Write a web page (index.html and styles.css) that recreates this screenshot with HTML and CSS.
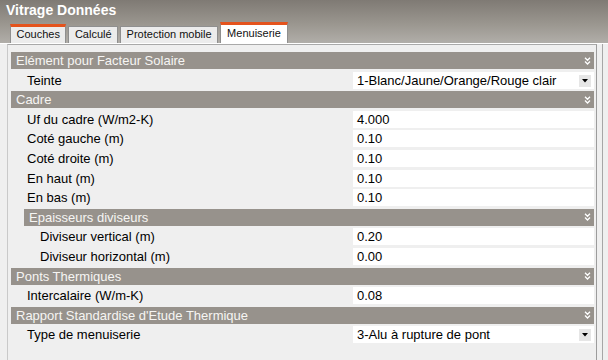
FILE: index.html
```html
<!DOCTYPE html>
<html lang="fr">
<head>
    <meta charset="UTF-8">
    <title>Vitrage Données</title>
    <link rel="stylesheet" href="styles.css">
</head>
<body>
    <div class="window">
        <div class="head">
            <div class="title">Vitrage Données</div>
            <div class="tabs">
                <div class="tab hot">Couches</div>
                <div class="tab">Calculé</div>
                <div class="tab">Protection mobile</div>
                <div class="tab active">Menuiserie</div>
            </div>
        </div>
        <div class="frame">
            <div class="panel">
                <div class="cat">Elément pour Facteur Solaire
                    <svg class="chev" width="7" height="8" viewBox="0 0 7 8"><path d="M1 .8 3.5 3.3 6 .8M1 4.5 3.5 7 6 4.5"/></svg>
                </div>
                <div class="prop">
                    <span class="label">Teinte</span>
                    <span class="value combo">1-Blanc/Jaune/Orange/Rouge clair
                        <span class="drop"><svg width="6" height="4" viewBox="0 0 6 4"><path d="M0 0h6L3 3.5z"/></svg></span>
                    </span>
                </div>
                <div class="cat">Cadre
                    <svg class="chev" width="7" height="8" viewBox="0 0 7 8"><path d="M1 .8 3.5 3.3 6 .8M1 4.5 3.5 7 6 4.5"/></svg>
                </div>
                <div class="prop"><span class="label">Uf du cadre (W/m2-K)</span><span class="value">4.000</span></div>
                <div class="prop"><span class="label">Coté gauche (m)</span><span class="value">0.10</span></div>
                <div class="prop"><span class="label">Coté droite (m)</span><span class="value">0.10</span></div>
                <div class="prop"><span class="label">En haut (m)</span><span class="value">0.10</span></div>
                <div class="prop"><span class="label">En bas (m)</span><span class="value">0.10</span></div>
                <div class="cat sub">Epaisseurs diviseurs
                    <svg class="chev" width="7" height="8" viewBox="0 0 7 8"><path d="M1 .8 3.5 3.3 6 .8M1 4.5 3.5 7 6 4.5"/></svg>
                </div>
                <div class="prop deep"><span class="label">Diviseur vertical (m)</span><span class="value">0.20</span></div>
                <div class="prop deep"><span class="label">Diviseur horizontal (m)</span><span class="value">0.00</span></div>
                <div class="cat">Ponts Thermiques
                    <svg class="chev" width="7" height="8" viewBox="0 0 7 8"><path d="M1 .8 3.5 3.3 6 .8M1 4.5 3.5 7 6 4.5"/></svg>
                </div>
                <div class="prop"><span class="label">Intercalaire (W/m-K)</span><span class="value">0.08</span></div>
                <div class="cat">Rapport Standardise d'Etude Thermique
                    <svg class="chev" width="7" height="8" viewBox="0 0 7 8"><path d="M1 .8 3.5 3.3 6 .8M1 4.5 3.5 7 6 4.5"/></svg>
                </div>
                <div class="prop">
                    <span class="label">Type de menuiserie</span>
                    <span class="value combo">3-Alu à rupture de pont
                        <span class="drop"><svg width="6" height="4" viewBox="0 0 6 4"><path d="M0 0h6L3 3.5z"/></svg></span>
                    </span>
                </div>
            </div>
        </div>
    </div>
</body>
</html>
```

FILE: styles.css
```css
body {
    margin: 0;
    font-family: "Liberation Sans", Arial, sans-serif;
    font-size: 13px;
    color: #000;
    background: #efefef;
}
.window {
    width: 608px;
    height: 360px;
    overflow: hidden;
    background: #efefef;
}
.head {
    height: 43px;
    background: linear-gradient(#7f7a74, #9a968f 55%, #b1aea9);
    border-bottom: 1px solid #fff;
}
.title {
    height: 22px;
    padding-left: 6px;
    line-height: 20px;
    font-size: 14px;
    font-weight: bold;
    color: #fff;
}
.tabs {
    display: flex;
    align-items: flex-end;
    height: 21px;
    padding-left: 10px;
    gap: 2px;
}
.tab {
    box-sizing: border-box;
    height: 17px;
    padding: 0 5.5px;
    border: 1px solid #8f8f8f;
    border-bottom: none;
    background: #ececec;
    font-size: 11px;
    line-height: 15px;
    color: #111;
}
.tab.hot {
    height: 19px;
    border-top: 3px solid #e4531d;
}
.tab.active {
    height: 21px;
    padding: 0 6px;
    border-top: 3px solid #e4531d;
    background: #fff;
    line-height: 17px;
}
.frame {
    height: 316px;
    width: 603px;
    box-sizing: border-box;
    border-right: 1px solid #a6a6a6;
    padding-right: 5px;
}
.panel {
    height: 100%;
    box-sizing: border-box;
    margin-left: 7px;
    padding: 7px 2px 0 3px;
    border-left: 1px solid #c9c9c9;
    border-top: 1px solid #a9a9a9;
    border-right: 1px solid #9c9c9c;
    display: flex;
    flex-direction: column;
    gap: 2.6px;
}
.cat {
    display: flex;
    align-items: center;
    justify-content: space-between;
    height: 17px;
    flex: 0 0 17px;
    padding: 0 3px 0 5px;
    background: #97928c;
    color: #f6f5f3;
}
.cat.sub {
    margin-left: 13px;
    padding-left: 5px;
}
.chev path {
    fill: none;
    stroke: #fff;
    stroke-width: 1.3;
}
.prop {
    display: flex;
    height: 17px;
    flex: 0 0 17px;
    line-height: 17px;
}
.label {
    flex: 0 0 326px;
    padding-left: 16px;
}
.prop.deep .label {
    flex-basis: 313px;
    padding-left: 29px;
}
.value {
    flex: 1;
    padding-left: 4px;
    background: #fff;
    position: relative;
}
.drop {
    position: absolute;
    right: 3px;
    top: 3px;
    width: 12px;
    height: 12px;
    background: #e6e6e6;
    display: flex;
    align-items: center;
    justify-content: center;
}
.drop path {
    fill: #000;
}
```
